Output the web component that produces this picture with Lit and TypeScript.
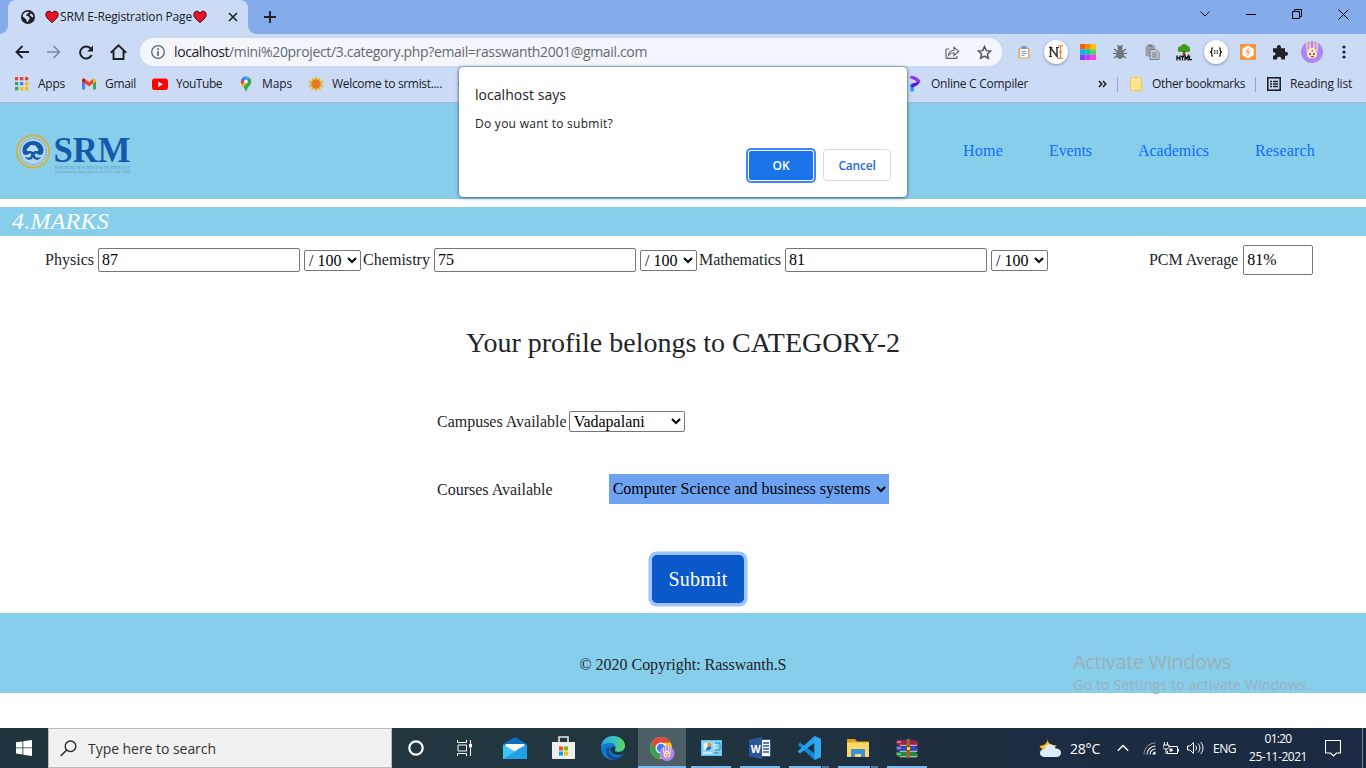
import { LitElement, html, css, svg } from "lit";
import { customElement } from "lit/decorators.js";

// Font shorthands usable both by the canvas ruler and the class names below.
const FONTS: Record<string, string> = {
  u12: '12px "Open Sans"',
  b12: '600 12px "Open Sans"',
  u14: '14px "Open Sans"',
  u20: '20px "Open Sans"',
  s16: '16px "Liberation Serif"',
  s20: '20px "Liberation Serif"',
  s28: '28px "Liberation Serif"',
  i24: 'italic 24px "Liberation Serif"',
};
const ruler = document.createElement("canvas").getContext("2d")!;

// Text whose tracking is tuned so that it occupies the given width.
const fit = (text: string, width: number, font: string, cls = "") => {
  ruler.font = FONTS[font];
  const gap = (width - ruler.measureText(text).width) / text.length;
  return html`<span class="t ${font} ${cls}" style="letter-spacing:${gap.toFixed(3)}px">${text}</span>`;
};

const icon = (w: number, h: number, body: unknown, cls = "") =>
  html`<svg class=${cls} width=${w} height=${h} viewBox="0 0 ${w} ${h}" fill="none">${body}</svg>`;

const shared = css`
  * { box-sizing: border-box; }
  svg { display: block; flex: none; }
  .t { white-space: nowrap; flex: none; }
  .u12, .b12, .u14, .u20 { font-family: "Open Sans", sans-serif; }
  .u12, .b12 { font-size: 12px; }
  .b12 { font-weight: 600; }
  .u14 { font-size: 14px; }
  .u20 { font-size: 20px; }
  .s16, .s20, .s28, .i24 { font-family: "Liberation Serif", serif; }
  .s16 { font-size: 16px; }
  .s20 { font-size: 20px; }
  .s28 { font-size: 28px; }
  .i24 { font-size: 24px; font-style: italic; }
`;

const heart = icon(14, 14, svg`<path d="M7 12.6C4 10 .8 7.6.8 4.6.8 2.500 2.200 1.200 3.900 1.200 5.300 1.200 6.400 2 7 3.200 7.600 2 8.700 1.200 10.100 1.200 11.800 1.200 13.200 2.500 13.200 4.600 13.200 7.600 10 10 7 12.600Z" fill="#e81224" stroke="#3a0c10" stroke-width="1"/>`);
const globe = icon(14, 14, svg`<circle cx="7" cy="7" r="7" fill="#202124"/><path d="M7.500 1.700c1 .6-.2 1.600-1 1.900-.4.900-1.300 1-1.500 1.900.9.600 2.200.3 2.800 1.200.2 1 1.200 1.200 1 2.100-.6.900-1.400 1.100-1.500 2.100-.2.800-1 1.100-1.600.8C6 10.500 5 9.800 4.700 8.700 3.800 8 2.500 7.300 1.600 6.200 1.900 3.500 4.500 1.300 7.500 1.700ZM9 3.700c1.100-.2 2.200.300 2.800 1.200.500.900.400 1.700.300 2.500-.9.200-1.200-.6-1.900-.9C9.300 6 8.500 4.600 9 3.700Z" fill="#cbdbf6"/>`);

const avatar = svg`<circle cx="11" cy="11" r="11" fill="#b085f5"/><path d="M6 1v9M9 0v9M13 0v9M16 1v9" stroke="#f4d7ae" stroke-width="1.500"/><path d="M11 7c3 0 5 3 5 6 0 3-2 4.500-5 4.500S6 16 6 13c0-3 2-6 5-6Z" fill="#fff0cf"/><path d="M8 12h2v2H8zM12 12h2v2h-2zM10 15h3v1.500h-3zM10.500 9h1.500v1.500h-1.500z" fill="#e0452c"/>`;

@customElement("browser-chrome")
class BrowserChrome extends LitElement {
  static styles = [shared, css`
    :host { display: block; height: 103px; background: #cbdbf6; border-bottom: 1px solid #a8b4ca; color: #202124; }
    .strip { display: flex; height: 34px; background: #84acea; padding-left: 8px; }
    .tab { position: relative; display: flex; align-items: center; width: 240px; height: 34px; padding-left: 13px; background: #cbdbf6; border-radius: 8px 8px 0 0; }
    .tab::before, .tab::after { content: ""; position: absolute; bottom: 0; width: 8px; height: 8px; }
    .tab::before { left: -8px; background: radial-gradient(circle at 0 0, transparent 7.5px, #cbdbf6 8px); }
    .tab::after { right: -8px; background: radial-gradient(circle at 100% 0, transparent 7.5px, #cbdbf6 8px); }
    .title { display: flex; align-items: center; gap: 1px; margin-left: 10px; line-height: 34px; }
    .close { margin-left: 21px; }
    .plus { margin: 11px 0 0 16px; }
    .controls { display: flex; margin-left: auto; height: 28px; }
    .controls .slot { width: 46px; height: 28px; }
    .slot { display: flex; align-items: center; justify-content: center; width: 32px; height: 36px; flex: none; }
    .controls .slot:first-child { width: 47px; }
    .toolbar { display: flex; height: 36px; padding-left: 6px; align-items: center; }
    .omnibox { display: flex; align-items: center; width: 862px; height: 28px; margin: 0 6px; border-radius: 14px; background: #f3f7fd; padding: 0 2px 0 11px; flex: none; }
    .url { display: flex; margin-left: 9px; line-height: 28px; }
    .path { color: #63676d; }
    .actions { display: flex; margin-left: auto; }
    .disc { display: flex; align-items: center; justify-content: center; width: 24px; height: 24px; border-radius: 50%; background: #fff; box-shadow: 0 1px 3px #7f8da8; }
    .marks { display: flex; height: 28px; align-items: center; padding-left: 14px; gap: 16px; line-height: 28px; }
    .mark { display: flex; align-items: center; gap: 8px; flex: none; }
    .covered { width: 449px; margin-right: -16px; margin-left: 0; flex: none; }
    .rest { display: flex; align-items: center; margin-left: 54px; }
    .line { width: 1px; height: 15px; background: #98a6be; }
    .more { margin-right: 10px; }
    .folder { margin: 0 9px 0 12px; }
    .list { margin: 0 9px 0 11px; }
    .other { margin-right: 10px; }
  `];

  render() {
    const slot = (c: unknown) => html`<div class="slot">${c}</div>`;
    const mark = (i: unknown, text: string, w: number) => html`<div class="mark">${i}${fit(text, w, "u12")}</div>`;
    const appColors = ["#ea4335", "#ea4335", "#ea4335", "#34a853", "#4285f4", "#fbbc04", "#34a853", "#fbbc04", "#fbbc04"];
    const cells = ["#ff5a00", "#ff8800", "#ffc400", "#00b8f0", "#13c98c", "#5ad35a", "#8b3dff", "#c03cff", "#ff3cf0"];
    return html`
      <div class="strip">
        <div class="tab">
          ${globe}
          <div class="title">${heart}${fit("SRM E-Registration Page", 132, "u12")}${heart}</div>
          ${icon(10, 10, svg`<path d="m1 1 8 8M9 1 1 9" stroke="#202124" stroke-width="1.600"/>`, "close")}
        </div>
        ${icon(12, 12, svg`<path d="M6 0v12M0 6h12" stroke="#202124" stroke-width="1.900"/>`, "plus")}
        <div class="controls">
          ${slot(icon(10, 6, svg`<path d="m.5.500 4.500 4.500L9.500.500" stroke="#111"/>`))}
          ${slot(icon(10, 1, svg`<path d="M0 .5h10" stroke="#000"/>`))}
          ${slot(icon(10, 10, svg`<path d="M.5 2.500h7v7h-7zM2.500 2.500v-2h7v7h-2" stroke="#000"/>`))}
          ${slot(icon(11, 11, svg`<path d="m.5.500 10 10M10.500.500l-10 10" stroke="#000"/>`))}
        </div>
      </div>
      <div class="toolbar">
        ${slot(icon(14, 14, svg`<path d="M14 7H1.500M7.500 1 1.500 7l6 6" stroke="#202124" stroke-width="1.900"/>`))}
        ${slot(icon(14, 14, svg`<path d="M0 7h12.500M6.500 1l6 6-6 6" stroke="#7c88a0" stroke-width="1.700"/>`))}
        ${slot(icon(15, 15, svg`<path d="M12.600 10A6 6 0 1 1 12 4" stroke="#202124" stroke-width="2"/><path d="M14 .5v6H8.200Z" fill="#202124"/>`))}
        ${slot(icon(17, 16, svg`<path d="M.8 8.700 8.500 1.300l7.700 7.400M3.500 7v8h10V7" stroke="#202124" stroke-width="1.900"/>`))}
        <div class="omnibox">
          ${icon(14, 14, svg`<circle cx="7" cy="7" r="6.300" stroke="#5f6368" stroke-width="1.300"/><path d="M7 6.200V11M7 3.200v1.700" stroke="#5f6368" stroke-width="1.600"/>`)}
          <div class="url">${fit("localhost", 55, "u14")}${fit("/mini%20project/3.category.php?email=rasswanth2001@gmail.com", 418, "u14", "path")}</div>
          <div class="actions">
            ${slot(icon(15, 13, svg`<path d="M4.500 3H1.700C1.200 3 1 3.200 1 3.700v8c0 .5.200.700.700.700h9.600c.5 0 .7-.2.700-.7V10" stroke="#5f6368" stroke-width="1.200"/><path d="M3.500 9.500C4 6.300 5.700 4.500 9 4.300V1.200L13.800 5.500 9 9.500V6.800C6.700 6.800 5 7.600 3.500 9.500Z" stroke="#5f6368" stroke-width="1.100"/>`))}
            ${slot(icon(15, 15, svg`<path d="m7.500 1.500 1.800 4.100 4.500.4-3.400 3 1 4.400-3.900-2.300-3.900 2.300 1-4.400-3.400-3 4.500-.4Z" stroke="#4d5156" stroke-width="1.400"/>`))}
          </div>
        </div>
        ${slot(icon(12, 13, svg`<rect x=".5" y="1.500" width="11" height="11" rx="1.500" fill="#e8a94c"/><rect x="2" y="3" width="8" height="8.500" fill="#f6f9ff"/><rect x="3.500" width="5" height="3" rx="1" fill="#6e94c9"/><path d="M3.500 5.500h5M3.500 7.500h5M3.500 9.500h3" stroke="#7d9cd1"/>`))}
        ${slot(html`<div class="disc">${icon(16, 16, svg`<path d="M1 3.500h3.500M8 3.500h3M1 12.500h3" stroke="#333" stroke-width="1"/><path d="M2.500 12.500v-9l6.500 9v-9" stroke="#333" stroke-width="1.500"/><path d="M10 1.500c1.500 0 2.500.5 2.500 1.500v10c0 1-1 1.500-2.500 1.500M15 1.500c-1.500 0-2.500.5-2.500 1.500v10c0 1 1 1.500 2.500 1.500M11 8h3" stroke="#f07430" stroke-width="1.100"/>`)}</div>`)}
        ${slot(icon(16, 16, cells.map((c, i) => svg`<rect x=${(i % 3) * 5.34} y=${Math.floor(i / 3) * 5.34} width="5.400" height="5.400" fill=${c}/>`)))}
        ${slot(icon(14, 16, svg`<path d="M1 5l3 2M13 5l-3 2M0 9.500h14M1 14l3-2M13 14l-3-2M4.500 1l1.300 2M9.500 1 8.200 3" stroke="#5c6067" stroke-width="1.200"/><circle cx="7" cy="4" r="2.500" fill="#6e7278"/><ellipse cx="7" cy="10" rx="4" ry="5" fill="#73777d"/>`))}
        ${slot(icon(15, 16, svg`<rect x=".5" y="1.500" width="9.500" height="11" rx="1" fill="#9ba1aa"/><path d="M3 1.500h4.500" stroke="#6e737b" stroke-width="2"/><path d="M5 5.500h6l3 3v7H5z" fill="#c4cad5" stroke="#7a808a"/><path d="M7 9h5M7 11h5M7 13h5" stroke="#7a808a"/>`))}
        ${slot(icon(16, 17, svg`<path d="M8 0c2 0 3 1 3.300 2 2 0 3 1.500 2.500 3C15 7 13 8.500 11 8H5C3 8.500.8 7 2 5 1.500 3 3 2 4.800 2.200 5 1 6.500 0 8 0Z" fill="#3f9b1c"/><path d="M7 7h2.200l.3 5h-3z" fill="#8b4b1b"/><path d="M1 11.500v5M4 11.500v5M1 14h3M5 12.500h3M6.500 12v4.500M9 16.500V12l1.500 2.500L12 12v4.500M13.500 11.500v4.200H16" stroke="#111" stroke-width="1.300"/>`))}
        ${slot(html`<div class="disc">${icon(14, 10, svg`<path d="M4 .8C2.500.8 2.800 2 2.800 3.300S2 5 1 5c1 0 1.800.4 1.800 1.700S2.500 9.200 4 9.200M10 .8c1.500 0 1.200 1.200 1.200 2.500S12 5 13 5c-1 0-1.800.4-1.800 1.700s.3 2.500-1.200 2.500M4.800 3.800h1.700M7.500 3.800h1.700M4.800 6.200h1.700M7.500 6.200h1.700" stroke="#222" stroke-width="1.300"/>`)}</div>`)}
        ${slot(icon(16, 16, svg`<rect width="16" height="16" fill="#f7953f"/><path d="m8 1.500 5.600 3.200v6.600L8 14.500l-5.600-3.200V4.700Z" fill="#fff"/><path d="M9 3.800 6.500 8h3L7 12.200M5.500 6.500l5 3M10.500 6.500l-5 3" stroke="#f4a45f" stroke-width=".9"/>`))}
        ${slot(icon(16, 16, svg`<path d="M1 4.200h4C4.500 2.500 5.300 1 6.900 1s2.400 1.500 2 3.200H13v3.600c1.600-.3 3 .4 3 2s-1.400 2.300-3 2V15.500H9.300c.3-1.700-.6-2.800-2.100-2.800S4.800 13.800 5 15.500H1v-4c1.600.2 2.500-.4 2.500-1.700S2.600 8 1 8.200Z" fill="#202124"/>`))}
        ${slot(icon(22, 22, avatar))}
        ${slot(icon(4, 14, svg`<circle cx="2" cy="2" r="1.600" fill="#202124"/><circle cx="2" cy="7" r="1.600" fill="#202124"/><circle cx="2" cy="12" r="1.600" fill="#202124"/>`))}
      </div>
      <div class="marks">
        ${mark(icon(16, 16, appColors.map((c, i) => svg`<rect x=${1 + (i % 3) * 5} y=${1 + Math.floor(i / 3) * 5} width="3.300" height="3.300" fill=${c}/>`)), "Apps", 27)}
        ${mark(icon(16, 16, svg`<path d="M1 4v9.500h3V7.500Z" fill="#4285f4"/><path d="M15 4v9.500h-3V7.500Z" fill="#34a853"/><path d="M1 4.500c0-2 2-2.500 3-1.600l4 3.200 4-3.200v4.500L8 10.500 4 7.500v-1L1 5.500Z" fill="#ea4335"/><path d="M12 2.900c1.200-.9 3-.3 3 1.600v1L12 7.700Z" fill="#fbbc04"/><path d="M1 4.500C1 2.600 2.800 2 4 2.900v4.800L1 5.500Z" fill="#c5221f"/>`), "Gmail", 31)}
        ${mark(icon(16, 16, svg`<rect y="2.500" width="16" height="11.500" rx="2.800" fill="#f00"/><path d="m6.300 5.700 4.600 2.600-4.600 2.600Z" fill="#fff"/>`), "YouTube", 46)}
        ${mark(icon(16, 16, svg`<path d="M3 5.500C3 2.500 5.200.500 8 .5L5.200 6Z" fill="#1a73e8"/><path d="M8 .5c3 0 5.200 2.200 5.200 5L8 6.500 5 3Z" fill="#4aa0f5"/><path d="M3.300 3.500 6.500 6 4 9C3 7.500 2.500 5.500 3.300 3.500Z" fill="#ea4335"/><path d="M4 9 11.500 2c2.200 2 2.200 4.500.8 6.700C10.500 11 9 12.500 8.400 15.200c-.1.500-.7.500-.8 0C7 12.700 5.500 11 4 9Z" fill="#34a853"/><path d="M4 9 7 5.500l1.800 2L5.500 11Z" fill="#fbbc04"/><circle cx="8" cy="5.600" r="1.900" fill="#fff"/>`), "Maps", 30)}
        ${mark(icon(16, 16, svg`<path d="m8 0 1.500 3 3-1.800-.3 3.500L16 5l-2.400 2.800L16 11l-3.700-.3.600 3.800-3-1.800L8 16l-1.800-3.200-3.200 1.700.7-3.600L0 11l2.300-3.200L0 5l3.800-.3L3.500 1.300l3 1.700Z" fill="#e6b93c"/><circle cx="8" cy="8" r="4.500" fill="#e87722"/>`), "Welcome to srmist....", 110)}
        <div class="covered">${icon(16, 16, svg`<circle cx="8" cy="8" r="7.500" fill="#3c4043"/>`)}</div>
        ${mark(icon(16, 16, svg`<path d="M3 8.500 5 7h3v2L7 11v4.500H3.500Z" fill="#20a7f8"/><path d="M3 0h3.500c3 1 5.500 2.800 7 5l-3 1.500C9 4.500 6.500 3.200 3.500 2.500Z" fill="#8f35f0"/><path d="M13.500 5c-1.500 3.500-4.500 5.500-8.500 6.500L3.500 10 6 7.500l4.500-1.500Z" fill="#6410d8"/>`), "Online C Compiler", 97)}
        <div class="rest">
          ${icon(9, 8, svg`<path d="m1 1 2.800 3L1 7M5 1l2.800 3L5 7" stroke="#202124" stroke-width="1.600"/>`, "more")}
          <div class="line"></div>
          ${icon(13, 14, svg`<path d="M.5.500h11v9l.9 1v3H.5Z" fill="#fee391" stroke="#ecc94f"/><path d="M9.500 13.500v-3l2-1" stroke="#ecc94f"/>`, "folder")}
          ${fit("Other bookmarks", 93, "u12", "other")}
          <div class="line"></div>
          ${icon(14, 14, svg`<rect x=".8" y=".8" width="12.400" height="12.400" stroke="#202124" stroke-width="1.600"/><path d="M3 4.500h2M6 4.500h5M3 7h2M6 7h5M3 9.500h2M6 9.500h5" stroke="#202124" stroke-width="1.300"/>`, "list")}
          ${fit("Reading list", 62, "u12")}
        </div>
      </div>`;
  }
}

@customElement("registration-page")
class RegistrationPage extends LitElement {
  static styles = [shared, css`
    :host { display: block; height: 625px; background: #fff; color: #212529; }
    .nav { display: flex; align-items: center; height: 96px; background: #87ceeb; padding: 0 51px 0 16px; }
    .logo { margin-top: 6px; overflow: visible; }
    .links { display: flex; gap: 46px; margin-left: auto; color: #0d6efd; }
    .band { height: 29px; margin-top: 8px; padding-left: 12px; background: #87ceeb; color: #fff; line-height: 29px; }
    .scores { display: flex; align-items: center; height: 48px; padding-left: 45px; }
    input, select { font: 16px "Liberation Serif", serif; color: #000; margin: 0; border: 1px solid #767676; border-radius: 2px; background: #fff; flex: none; }
    input { width: 202px; height: 24px; margin: 0 4px; padding: 1px 3px; }
    select { width: 57px; height: 21px; padding: 0 0 1px; }
    .next { margin-left: 2px; }
    .pcm { margin-left: 101px; }
    .average { width: 70px; height: 30px; margin: 0 0 0 5px; }
    .result { display: flex; justify-content: center; height: 34px; margin: 42px 0 0; line-height: 34px; font-weight: 400; }
    .choices { width: 492px; margin: 51px auto 0; }
    .row { display: flex; align-items: center; height: 21px; line-height: 17px; }
    .campus { width: 116px; margin-left: 2px; padding: 0; }
    .courses { height: 30px; margin-top: 42px; }
    .course { width: 280px; height: 30px; margin-left: 56px; background: #6ea3f2; border: 0; border-radius: 0; }
    .submit { display: flex; align-items: center; justify-content: center; width: 92px; height: 48px; margin: 51px 0 0 652px; border: 0; border-radius: 4.800px; background: #0a58ca; color: #fff; box-shadow: 0 0 0 3.600px #9ec5fe; padding: 0; }
    .footer { display: flex; align-items: center; justify-content: center; height: 80px; margin-top: 10px; padding-top: 24px; background: #87ceeb; }
  `];

  render() {
    const subject = (name: string, w: number, mark: string, cls = "") => html`
      ${fit(name, w, "s16", cls)}<input .value=${mark}><select><option>/ 100</option></select>`;
    return html`
      <div class="nav">
        <svg class="logo" width="118" height="42" viewBox="0 0 118 42">
          <circle cx="17" cy="18.500" r="16" fill="#b3d6ea" stroke="#c3b75c" stroke-width="2.400"/>
          <circle cx="17" cy="18.500" r="13.200" fill="none" stroke="#6da5d3" stroke-width="1.500" stroke-dasharray="1.500 1"/>
          <path d="M17 8c6 0 10.500 4 10.500 9.500 0 3-1.500 4.500-3.500 4.500-1.500 0-2.500-1.500-4.500-1.500-1 0-1 3 1 4h5l-4 2.500-3.500-1-1-2-1 2-3.500 1-4-2.500h5c2-1 2-4 1-4-2 0-3 1.500-4.500 1.500-2 0-3.500-1.500-3.500-4.500C6.500 12 11 8 17 8Z" fill="#1559aa"/>
          <path d="M11 18c-.5-2 .5-3.500 2-3.500.5-2 2.500-3 4-2 2-.5 3.500.5 3.500 2 1.500.5 2.500 2 1.500 3.500h-3l-2 1-2-1Z" fill="#c3dff1"/>
          <text x="37.500" y="28.500" font-family="Liberation Serif" font-weight="700" font-size="36" textLength="77" lengthAdjust="spacingAndGlyphs" fill="#1559aa">SRM</text>
          <text x="39" y="35.500" font-family="Liberation Serif" font-size="4.500" textLength="75" lengthAdjust="spacingAndGlyphs" fill="#5194bd">INSTITUTE OF SCIENCE &amp; TECHNOLOGY</text>
          <text x="39" y="40" font-family="Liberation Serif" font-size="3.600" textLength="75" lengthAdjust="spacingAndGlyphs" fill="#6397b0">(Deemed to be University u/s 3 of UGC Act, 1956)</text>
        </svg>
        <div class="links">
          ${fit("Home", 40, "s16")}${fit("Events", 43, "s16")}${fit("Academics", 71, "s16")}${fit("Research", 60, "s16")}
        </div>
      </div>
      <div class="band">${fit("4.MARKS", 97, "i24")}</div>
      <div class="scores">
        ${subject("Physics", 49, "87")}
        ${subject("Chemistry", 67, "75", "next")}
        ${subject("Mathematics", 82, "81", "next")}
        ${fit("PCM Average", 90, "s16", "pcm")}<input class="average" .value=${"81%"}>
      </div>
      <h3 class="result">${fit("Your profile belongs to CATEGORY-2", 434, "s28")}</h3>
      <div class="choices">
        <div class="row">${fit("Campuses Available", 130.5, "s16")}<select class="campus"><option>Vadapalani</option></select></div>
        <div class="row courses">${fit("Courses Available", 116.5, "s16")}<select class="course"><option>Computer Science and business systems</option></select></div>
      </div>
      <button class="submit">${fit("Submit", 59, "s20")}</button>
      <div class="footer">${fit("© 2020 Copyright: Rasswanth.S", 207, "s16")}</div>`;
  }
}

@customElement("task-bar")
class TaskBar extends LitElement {
  static styles = [shared, css`
    :host { display: flex; height: 40px; color: #fff; background: linear-gradient(90deg, #20363f 0%, #21363f 45%, #1d2c40 75%, #1b2942 100%); }
    .start { display: flex; align-items: center; justify-content: center; width: 48px; }
    .search { display: flex; align-items: center; width: 344px; height: 40px; padding-left: 11px; gap: 11px; background: #f1f1f1; border: 1px solid #b9bcbd; color: #333; }
    .app { display: flex; align-items: center; justify-content: center; width: 48px; height: 40px; }
    .pinned { display: flex; gap: 1px; margin-left: 3px; }
    .open { border-bottom: 2px solid #76b9ed; padding-top: 2px; width: 40px; margin: 0 4px; }
    .active { background: #4c5f67; border-bottom: 2px solid #76b9ed; padding-top: 2px; }
    .stacked { border-image: linear-gradient(90deg, #76b9ed 31px, #16232b 31px, #16232b 32px, #507b9b 32px) 2; }
    .tray { display: flex; align-items: center; margin-left: auto; width: 327px; }
    .temp { margin: 0 17px 0 9px; }
    .gap { margin-right: 14px; }
    .wifi { margin-right: 7px; }
    .bat { margin-right: 8px; }
    .vol { margin-right: 9px; }
    .clock { display: flex; flex-direction: column; align-items: center; width: 60px; margin-left: 12px; line-height: 18px; }
    .note { margin-left: 17px; }
    .edge { width: 1px; height: 40px; margin-left: auto; margin-right: 3px; background: #78818f; }
  `];

  render() {
    const app = (c: unknown, cls = "") => html`<div class="app ${cls}">${c}</div>`;
    return html`
      <div class="start">${icon(16, 16, svg`<path d="M0 2.300 6.500 1.400V7.500H0ZM7.300 1.200 16 0v7.500H7.300ZM0 8.300h6.500v6.200L0 13.600ZM7.300 8.300H16V16l-8.700-1.300Z" fill="#fff"/>`)}</div>
      <div class="search">
        ${icon(17, 17, svg`<circle cx="10.500" cy="6.300" r="5.300" stroke="#222" stroke-width="1.300"/><path d="M6.700 10 .7 16" stroke="#222" stroke-width="1.400"/>`)}
        ${fit("Type here to search", 128, "u14")}
      </div>
      ${app(icon(16, 16, svg`<circle cx="8" cy="8" r="6.700" stroke="#fff" stroke-width="2.200"/>`))}
      ${app(icon(17, 16, svg`<path d="M1.500 0v2.500h9V0M1.500 16v-2.500h9V16M2 5h8.500v6H2zM14.500 0v4M14.500 8v8" stroke="#fff"/><path d="M13 4h3v3.500h-3z" fill="#fff"/>`))}
      <div class="pinned">
        ${app(icon(24, 22, svg`<path d="M0 7 12 0l12 7v4H0Z" fill="#0a6fc2"/><path d="M2.500 7h19v9h-19z" fill="#fff"/><path d="M0 7.500 12 16.500 24 7.500V22H0Z" fill="#2ba6e9"/><path d="m0 22 12-8.500L17 11l7 -3.500V22Z" fill="#24a0e6"/><path d="M0 7.500V22l12-7.500Z" fill="#3cc4f5"/><path d="M2.500 7h19L12 14.500Z" fill="#fff"/>`))}
        ${app(icon(24, 24, svg`<path d="M7 7V1h9v6" stroke="#e7e8e8" stroke-width="1.600"/><path d="M0 6h23v15.500c0 1-.5 1.500-1.500 1.500h-20C.5 23 0 22.500 0 21.500Z" fill="#edeeee"/><path d="M7 10.500h4v4H7z" fill="#f25022"/><path d="M12 10.500h4v4h-4z" fill="#7fba00"/><path d="M7 15.500h4v4H7z" fill="#00a4ef"/><path d="M12 15.500h4v4h-4z" fill="#ffb900"/>`))}
        ${app(icon(24, 24, svg`<defs><linearGradient id="eg" x1="0" x2="1"><stop offset="0" stop-color="#28a9dd"/><stop offset=".55" stop-color="#33c4c5"/><stop offset="1" stop-color="#65d84e"/></linearGradient></defs><circle cx="12" cy="12" r="12" fill="#1379d0"/><path d="M.3 10C1 4 6 0 12 0c7 0 12 4.500 12 9.500 0 4-3 6.500-6.500 6.500-2.800 0-4.200-1-3.500-2.300C15.500 12 15 7.500 10 7 5.500 6.500 1.500 8 .3 10Z" fill="url(#eg)"/><path d="M8.500 11.500c-2 5 1.500 9.500 6.500 9.500 3 0 5.500-1 7.200-3C20 22 16.500 24 12.500 24 7 23 4 17 5.500 13c.7-1.700 2-2.500 3-1.500Z" fill="#174a93"/><path d="M14 13.700C13.300 15 15 16 17.500 16c2 0 4-.8 5.200-2.200L24 12V16L22.200 18C19 20 10.500 19 9.500 14.500 9 12.500 10.500 10.500 12 10.500c1.800 0 3 1.500 2 3.200Z" fill="#20363f"/>`))}
        ${app(icon(25, 25, svg`<circle cx="11" cy="12" r="11" fill="#f7c92d"/><path d="M1.500 6.500A11 11 0 0 1 20.500 6.500L11 7 6 14.500Z" fill="#e2493c"/><path d="M1.500 6.500 6.500 14.500l5 2.500L9.500 23A11 11 0 0 1 1.500 6.500Z" fill="#38a04f"/><circle cx="11" cy="12" r="5.500" fill="#fff"/><circle cx="11" cy="12" r="4.200" fill="#3b7ff0"/><g transform="translate(9.500 10) scale(.68)">${avatar}</g>`), "active")}
        ${app(icon(21, 16, svg`<rect width="21" height="16" fill="#5cc0ec"/><rect x="1" y="1" width="19" height="14" fill="#8cd7f5"/><circle cx="6.500" cy="6.500" r="4" fill="#eff8fc"/><path d="M6.500 6.500v-4a4 4 0 0 1 4 4Z" fill="#e98b30"/><path d="M6.500 6.500h4a4 4 0 0 1-6 3.500Z" fill="#2476bb"/><path d="M12 5h3M12 8h3M2 13h9" stroke="#fff"/><path d="M14 3h5v7h-5M13 13h5" stroke="#2581bd"/>`), "open")}
        ${app(icon(22, 22, svg`<path d="M12 2.500h9.500v17H12z" fill="#fff" stroke="#2b579a"/><path d="M14 6h6M14 9h6M14 12h6M14 15h6" stroke="#2b579a" stroke-width="1.300"/><path d="M0 2.500 13 0v22L0 19.500Z" fill="#2b579a"/><text x="1.700" y="15.500" font-family="Open Sans" font-weight="700" font-size="11" textLength="10" lengthAdjust="spacingAndGlyphs" fill="#fff">W</text>`), "open")}
        ${app(icon(24, 24, svg`<path d="m17.500 0 6.500 3v18l-6.500 3L1 9l2-2.500 14.500 11Z" fill="#1687d1"/><path d="m17.500 0 .5 6.500L3 17.500.5 15.500Z" fill="#25a2ec"/><path d="m17.500 0 6.500 3v18l-6.500 3Z" fill="#33a9ef"/>`), "open stacked")}
        ${app(icon(22, 18, svg`<path d="M0 1c0-.6.400-1 1-1h7l2 2.500h11c.6 0 1 .4 1 1V18H0Z" fill="#dda11c"/><path d="M0 3.500h22V18H0z" fill="#ffd766"/><path d="M4 18v-8h14v8h-4v-3H8v3Z" fill="#3b91d6"/>`), "open stacked")}
        ${app(icon(24, 19, svg`<path d="M2 1h18l3 2v4H4L1 5Z" fill="#9b2352"/><path d="M1 7h19l3 2v4H4l-3-2Z" fill="#3447b5"/><path d="M1 13h19l3 2v3H4l-3-2Z" fill="#258b3c"/><path d="M5 6.300h17M5 12.300h17M5 17.800h17" stroke="#e4d9c8" stroke-width=".9"/><path d="M2 3h4M2 9h4M2 15h4" stroke="#eadb9b"/><path d="M11.500 0h3.500v19h-3.500z" fill="#9c6135"/><path d="M11.500 7.500h4v4h-4z" fill="#f0cf68" stroke="#684f1b"/>`), "open")}
      </div>
      <div class="tray">
        ${icon(22, 20, svg`<path d="M8.500.500C8.500 5 12.500 8.500 17.500 7c-2 5-8 7-12 5C2.500 11 1 9.500.5 7.500 4.500 8.500 9 5 8.500.500Z" fill="#f9be25"/><path d="M6 19C3 19 1 17.500 1 15s2-4 4.500-4c.5-3 3-4.700 5.500-4.700s5 1.500 5.500 4.200C19.500 10.300 22 12 22 14.800S20 19 17 19Z" fill="#dcedfb"/>`)}
        ${fit("28°C", 30, "u14", "temp")}
        ${icon(12, 8, svg`<path d="m.8 6.800 5.200-5.300 5.200 5.300" stroke="#fff" stroke-width="1.400"/>`, "gap")}
        ${icon(13, 13, svg`<path d="M1 12.500C1 6 6 1 12.500 1" stroke="#8e969f"/><path d="M4 12.500C4 8 8 4 12.500 4M7 12.500c0-3 2.500-5.500 5.500-5.500" stroke="#fff" stroke-width="1.100"/><path d="M9.500 12.500c0-1.500 1.500-3 3-3v3Z" fill="#fff"/>`, "wifi")}
        ${icon(16, 13, svg`<path d="M6 4.500h8.500v7h-10V9M15.500 7v2.500M1.500 0v3M4.500 0v3M0 3h6v2.500L4.500 7h-3L0 5.500ZM3 7v5" stroke="#fff"/><path d="M6.500 6.500h3v3h-3z" fill="#fff"/>`, "bat")}
        ${icon(17, 14, svg`<path d="M.5 5h2.500L6.500 1.500v11L3 9H.5Z" stroke="#fff"/><path d="M8.500 4.500c1.300 1.300 1.300 3.700 0 5M11 2.500c2.500 2.500 2.500 6.500 0 9M13.500 1c3.300 3.300 3.300 8.700 0 12" stroke="#fff"/>`, "vol")}
        ${fit("ENG", 23, "u12")}
        <div class="clock">${fit("01:20", 27, "u12")}${fit("25-11-2021", 58, "u12")}</div>
        ${icon(16, 17, svg`<path d="M.5.500h15v12.500h-4l-3 3-3-3h-5Z" stroke="#fff" stroke-width="1.100"/>`, "note")}
        <div class="edge"></div>
      </div>`;
  }
}

@customElement("app-root")
class AppRoot extends LitElement {
  static styles = [shared, css`
    :host { display: block; position: relative; width: 1366px; height: 768px; overflow: hidden; background: #fff; }
    .dialog { position: absolute; left: 459px; top: 67px; width: 448px; height: 130px; padding: 16px; border-radius: 4px; background: #fff; box-shadow: 0 0 2px #33475a, 0 1px 4px #33475a88; color: #202124; }
    .says { display: flex; height: 24px; line-height: 24px; }
    .ask { display: flex; height: 18px; margin-top: 8px; line-height: 18px; }
    .buttons { display: flex; justify-content: flex-end; gap: 10px; margin-top: 16px; }
    .ok, .cancel { display: flex; align-items: center; justify-content: center; height: 32px; padding: 0; border-radius: 4px; }
    .ok { width: 64px; height: 29px; margin-top: 1.500px; border: 0; border-radius: 2px; background: #1a73e8; color: #fff; box-shadow: 0 0 0 1px #fff, 0 0 0 3px #4285f4; }
    .cancel { width: 68px; border: 1px solid #dadce0; background: #fff; color: #2568e0; }
    .watermark { position: absolute; left: 1073px; top: 648px; display: flex; flex-direction: column; color: #9bb0ba; }
    .big { line-height: 27px; }
    .small { line-height: 19px; }
  `];

  render() {
    return html`
      <browser-chrome></browser-chrome>
      <registration-page></registration-page>
      <task-bar></task-bar>
      <div class="dialog">
        <div class="says">${fit("localhost says", 91, "u14")}</div>
        <div class="ask">${fit("Do you want to submit?", 138, "u12")}</div>
        <div class="buttons"><button class="ok">${fit("OK", 17, "b12")}</button><button class="cancel">${fit("Cancel", 37, "b12")}</button></div>
      </div>
      <div class="watermark">${fit("Activate Windows", 158, "u20", "big")}${fit("Go to Settings to activate Windows.", 237, "u14", "small")}</div>`;
  }
}
